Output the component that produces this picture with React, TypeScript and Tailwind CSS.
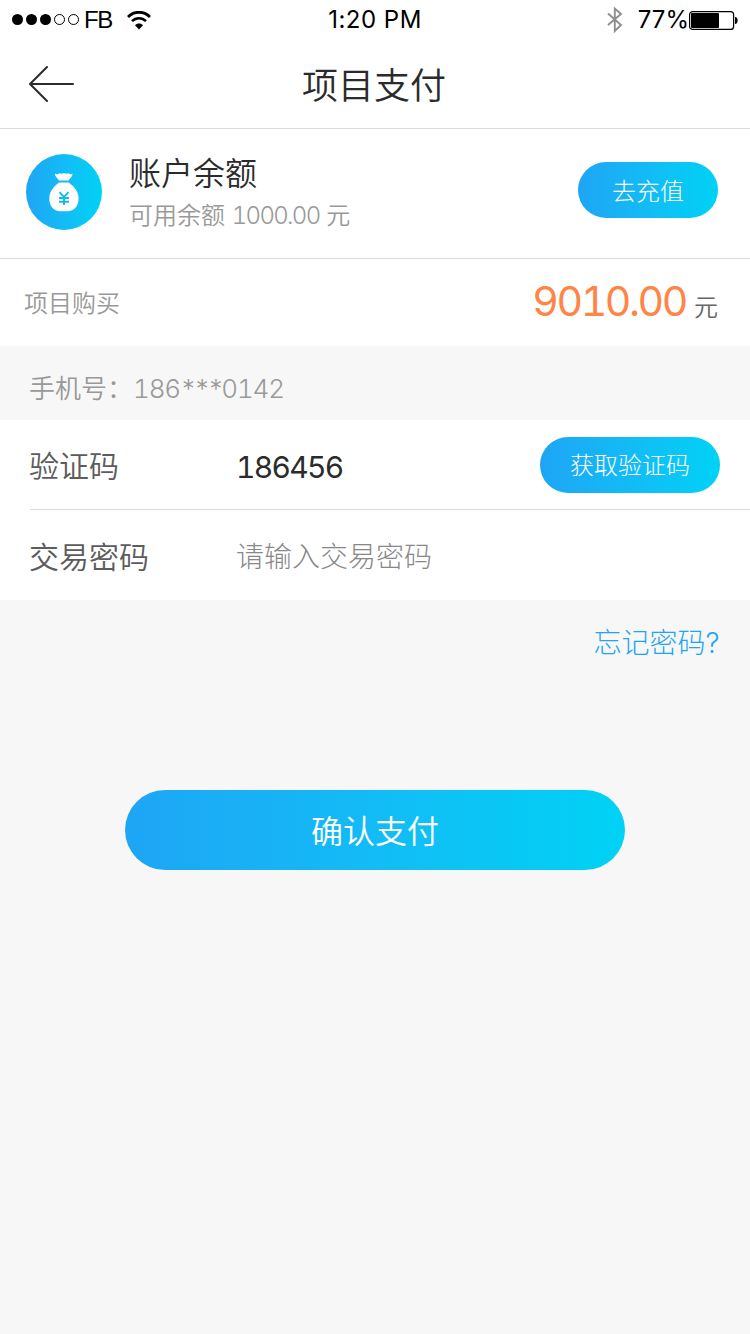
import type { ReactNode } from "react";
import clsx from "clsx";

const GRADIENT = "bg-linear-to-r from-[#1ea5f5] to-[#00d2f5]";

const SignalDots = ({ strength }: { strength: number }) => (
  <svg width="68" height="12" viewBox="0 0 68 12">
    {[0, 1, 2, 3, 4].map((i) => (
      <circle
        key={i}
        cx={5.5 + i * 14}
        cy="5.5"
        r={i < strength ? 5.5 : 5}
        fill={i < strength ? "#000" : "none"}
        stroke={i < strength ? "none" : "#000"}
      />
    ))}
  </svg>
);

const WifiIcon = () => (
  <svg width="24" height="19" viewBox="0 0 24 19" fill="none" stroke="#000">
    <path d="M1 6C7 -0.3 17 -0.3 23 6" strokeWidth="2.8" />
    <path d="M5 10.2C9 6.2 15 6.2 19 10.2" strokeWidth="2.6" />
    <path d="M8 14.2C10 11.8 14 11.8 16 14.2L12 18.5Z" fill="#000" stroke="none" />
  </svg>
);

const BluetoothIcon = () => (
  <svg width="16" height="28" viewBox="0 0 16 28" fill="none" stroke="#8e8e8e" strokeWidth="1.9">
    <path d="M1 7.5L14 19L7.8 25V2.5L14 8L1 19" />
  </svg>
);

const BatteryIcon = () => (
  <svg width="49" height="19" viewBox="0 0 49 19">
    <rect x="0.6" y="0.6" width="44" height="17.8" rx="3" fill="none" stroke="#000" strokeWidth="1.2" />
    <rect x="2" y="2" width="28" height="15" rx="1" fill="#000" />
    <path d="M46 6C49.5 6 49.5 13 46 13Z" fill="#000" />
  </svg>
);

const StatusBar = () => (
  <div className="grid h-10 grid-cols-3 items-center text-[24px] leading-10 text-black">
    <div className="flex items-center pl-3">
      <SignalDots strength={3} />
      <span className="ml-1 font-['Liberation_Sans'] leading-[38px] tracking-[-1.4px]">FB</span>
      <span className="ml-[15px]">
        <WifiIcon />
      </span>
    </div>
    <span className="text-center tracking-[0.5px]">1:20 PM</span>
    <div className="flex items-center justify-end pr-3">
      <span className="mr-[15px]">
        <BluetoothIcon />
      </span>
      <span>77%</span>
      <BatteryIcon />
    </div>
  </div>
);

const NavBar = ({ title }: { title: string }) => (
  <div className="grid h-[89px] grid-cols-3 items-center border-b border-[#dcdcdc]">
    <button className="ml-7 w-12">
      <svg width="48" height="38" viewBox="0 0 48 38" fill="none" stroke="#2b2b2b" strokeWidth="2" strokeLinecap="round" strokeLinejoin="round">
        <path d="M19 2L2 19L19 36M2 19H45" />
      </svg>
    </button>
    <h1 className="pt-1 pr-0.5 text-center text-[36px] leading-[84px] font-[350] text-[#2b2b2b]">{title}</h1>
  </div>
);

const MoneyBagIcon = () => (
  <svg width="30" height="40" viewBox="0 0 30 40" className="mr-px mb-px">
    <path d="M6 1.6C7.5 2.8 9.5 2.5 10.5 1C12 2.2 13.5 2 15 1C16.5 2 18 2.2 19.5 1C20.5 2.5 22 2.8 23.5 1.6C23.8 4 21.5 6 19.6 8.4H10C8 6 5.7 4 6 1.6Z" fill="#fff" />
    <path d="M10 10.5H19.6C24 14 29.6 18 29.6 26.5C29.6 34.5 25 39.2 18.5 39.2H11.2C4.8 39.2 0.3 34.5 0.3 26.5C0.3 18 6 14 10 10.5Z" fill="#fff" />
    <path d="M10.5 20.2L15 24.8L19.5 20.2M15 24.8V33M10 26H20M10 29.8H20" fill="none" stroke="#12baf4" strokeWidth="1.9" />
  </svg>
);

const PillButton = ({ className, children }: { className?: string; children: ReactNode }) => (
  <button className={clsx("flex items-center justify-center rounded-full pt-[3px] text-white", GRADIENT, className)}>
    {children}
  </button>
);

const AccountCard = () => (
  <div className="flex h-[130px] items-start border-b border-[#dcdcdc] pr-8 pl-[26px]">
    <div className={clsx("mt-[25px] flex size-[76px] items-center justify-center rounded-full", GRADIENT)}>
      <MoneyBagIcon />
    </div>
    <div className="mt-[22px] ml-[27px]">
      <p className="text-[32px] leading-[46px] font-[350] text-[#2b2b2b]">账户余额</p>
      <p className="pt-px text-[24px] leading-9 font-[350] text-[#999]">
        可用余额 <span className="tracking-[-1.7px] tabular-nums">1000.00</span> 元
      </p>
    </div>
    <PillButton className="mt-[33px] ml-auto h-14 w-[140px] text-[24px] font-light">去充值</PillButton>
  </div>
);

const FormRow = ({ label, children }: { label: string; children: ReactNode }) => (
  <div className="flex items-center">
    <span className="w-[207px] pt-1 text-[30px] font-[350] text-[#5c5c5c]">{label}</span>
    {children}
  </div>
);

const App = () => {
  return (
    <div className="min-h-[1334px] w-[750px] bg-[#f7f7f7] font-['Inter','Noto_Sans_CJK_SC',sans-serif]">
      <div className="bg-white">
        <StatusBar />
        <NavBar title="项目支付" />
        <AccountCard />
        <div className="flex h-[87px] items-center justify-between pr-8 pl-6">
          <span className="pt-0.5 text-[24px] font-[350] text-[#999]">项目购买</span>
          <p className="flex items-baseline pb-1 text-[#666]">
            <span className="text-[41px] leading-[58px] tracking-[-2.4px] text-[#ff8547] tabular-nums">9010.00</span>
            <span className="ml-2 text-[24px] leading-9 font-[350]">元</span>
          </p>
        </div>
      </div>

      <div className="flex h-[74px] items-center pt-2.5 pl-[29px] text-[26px] font-[350] text-[#999]">
        <span>手机号：</span>
        <span className="tabular-nums">
          <span className="tracking-[-1.2px]">186</span>
          <span className="tracking-[-3px]">***</span>
          <span className="tracking-[-1.2px]">0142</span>
        </span>
      </div>

      <div className="bg-white pl-[29px]">
        <div className="ml-px flex h-[90px] flex-col justify-center border-b border-[#dcdcdc]">
          <div className="-ml-px">
            <FormRow label="验证码">
              <span className="pt-1.5 text-[30px] tracking-[-1.7px] text-[#2b2b2b] tabular-nums">186456</span>
              <PillButton className="mr-[30px] ml-auto h-14 w-[180px] text-[24px] font-light">获取验证码</PillButton>
            </FormRow>
          </div>
        </div>
        <div className="flex h-[90px] items-center">
          <FormRow label="交易密码">
            <span className="pt-1 text-[28px] font-light text-[#888]">请输入交易密码</span>
          </FormRow>
        </div>
      </div>

      <div className="flex justify-end pt-[22px] pr-[31px]">
        <a className="text-[28px] leading-[42px] font-light text-[#1ea5f5]">
          忘记密码<span className="tracking-[-0.5px]">?</span>
        </a>
      </div>

      <PillButton className="mx-auto mt-[126px] h-20 w-[500px] text-[32px] font-[350]">确认支付</PillButton>
    </div>
  );
};

export default App;
